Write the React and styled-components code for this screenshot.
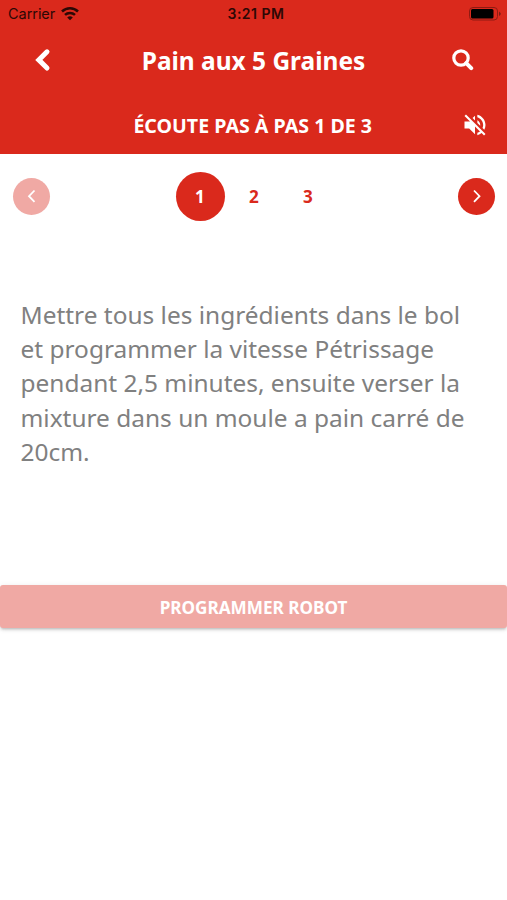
import React from "react";
import styled, { createGlobalStyle } from "styled-components";

const Global = createGlobalStyle`
  * { box-sizing: border-box; }
  body { margin: 0; background: #fff; font-family: "Noto Sans", sans-serif; }
  button { border: 0; padding: 0; background: none; font: inherit; color: inherit; }
`;
const Screen = styled.main`
  width: 507px; height: 900px; background: #fff; overflow: hidden;
`;
const Header = styled.header`
  height: 154.4px; background: #da291c; color: #fff;
`;
const StatusBar = styled.div`
  height: 27px; padding: 0 6px 0 8px; display: grid;
  grid-template-columns: 1fr auto 1fr; align-items: center;
  color: #2d0805; font: 14.5px/27px Inter, sans-serif;
`;
const Carrier = styled.div`
  display: flex; align-items: center; gap: 6px;
`;
const CarrierName = styled.span`
  letter-spacing: -0.05px;
`;
const Clock = styled.div`
  padding-left: 3px; font-weight: 600; font-size: 14px; letter-spacing: .5px;
`;
const Battery = styled.svg`
  justify-self: end; display: block;
`;
const TitleBar = styled.div`
  height: 66px; padding: 0 33px; display: grid;
  grid-template-columns: 22px 1fr 22px; align-items: center;
`;
const Title = styled.h1`
  margin: 0; padding-top: 2px; text-align: center; font-size: 24.45px; line-height: 34px; font-weight: 700;
`;
const IconButton = styled.button`
  display: flex; justify-content: center;
  svg { flex: none; }
`;
const StepBar = styled.div`
  height: 61px; padding: 2px 20.5px 0 21px; display: grid;
  grid-template-columns: 24px 1fr 24px; align-items: center;
`;
const StepTitle = styled.h2`
  grid-column: 2; margin: 0 -10px; padding: 2px 2px 0 0; text-align: center;
  font-size: 19.6px; line-height: 26px; font-weight: 700;
`;
const Pager = styled.nav`
  height: 83.6px; padding: 0 12px 0 13px; display: flex; align-items: center; justify-content: space-between;
`;
const Arrow = styled.button`
  width: 37px; height: 37px; border-radius: 50%; display: flex; align-items: center; justify-content: center;
  color: #fff; background: ${(p) => (p.disabled ? "#f0a9a4" : "#da291c")};
`;
const Steps = styled.div`
  display: flex; gap: 5px;
`;
const Step = styled.button`
  width: 49px; height: 49px; border-radius: 50%; font-size: 17.1px; font-weight: 700;
  color: ${(p) => (p.$active ? "#fff" : "#da291c")};
  background: ${(p) => (p.$active ? "#da291c" : "transparent")};
`;
const Instructions = styled.p`
  margin: 0; height: 347px; padding: 60px 20px 0 20.5px; color: #808080;
  font-size: 24.45px; line-height: 34.2px;
`;
const ProgramButton = styled.button`
  width: 100%; height: 43.5px; padding-top: 1px; border-radius: 3px; display: block; text-align: center;
  background: #f0a9a4; color: #fff; font-size: 17.15px; font-weight: 700;
  box-shadow: 0 3px 2px -2px rgba(0,0,0,.1), 0 2px 3px rgba(0,0,0,.12), 0 1px 6px rgba(0,0,0,.08);
`;

export default function App() {
  return (
    <Screen>
      <Global />
      <Header>
        <StatusBar>
          <Carrier>
            <CarrierName>Carrier</CarrierName>
            <svg width="18" height="14" viewBox="0 0 18 14" fill="none" stroke="currentColor" strokeWidth="2.5">
              <path d="M1 4.500a11.5 11.5 0 0 1 16 0M4 7.900a7.2 7.2 0 0 1 10 0" />
              <path d="M9 13.2 6.2 10.500a4 4 0 0 1 5.6 0z" fill="currentColor" stroke="none" />
            </svg>
          </Carrier>
          <Clock>3:21 PM</Clock>
          <Battery width="32" height="14" viewBox="0 0 32 14">
            <rect x=".5" y=".5" width="28" height="12.5" rx="3.5" fill="none" stroke="#8e1b12" />
            <rect x="2" y="2" width="22.5" height="9.5" rx="1.5" fill="#000" />
            <path d="M30 4.5q3.5 2.3 0 4.6z" fill="#7b1c14" />
          </Battery>
        </StatusBar>
        <TitleBar>
          <IconButton aria-label="Retour">
            <svg width="22" height="24" viewBox="0 0 22 24" fill="none" stroke="#fff" strokeWidth="5"><path d="M14 3.8 5.800 11.900l8.200 8.100" strokeLinecap="round" /></svg>
          </IconButton>
          <Title>Pain aux 5 Graines</Title>
          <IconButton aria-label="Rechercher">
            <svg width="22" height="22" viewBox="0 0 22 22" fill="none" stroke="#fff" strokeWidth="3.2"><circle cx="9" cy="9" r="7.200" /><path d="m14.200 14.200 5 5" strokeWidth="4" strokeLinecap="round" /></svg>
          </IconButton>
        </TitleBar>
        <StepBar>
          <StepTitle>ÉCOUTE PAS À PAS 1 DE 3</StepTitle>
          <IconButton aria-label="Son désactivé">
            <svg width="28" height="28" viewBox="0 0 24 24" fill="#fff"><path d="M16.5 12c0-1.77-1.02-3.29-2.5-4.03v2.21l2.45 2.45c.03-.2.05-.41.05-.63zm2.5 0c0 .94-.2 1.82-.54 2.64l1.51 1.51C20.63 14.91 21 13.5 21 12c0-4.28-2.99-7.86-7-8.77v2.06c2.89.86 5 3.54 5 6.71zM4.27 3 3 4.27 7.73 9H3v6h4l5 5v-6.73l4.25 4.25c-.67.52-1.42.93-2.25 1.18v2.06c1.38-.31 2.63-.95 3.69-1.81L19.73 21 21 19.73l-9-9L4.27 3zM12 4 9.91 6.09 12 8.18V4z" /></svg>
          </IconButton>
        </StepBar>
      </Header>
      <Pager>
        <Arrow disabled aria-label="Précédent"><svg width="20" height="20" viewBox="0 0 20 20" fill="none" stroke="currentColor" strokeWidth="1.8"><path d="m12.5 4.5-5.5 5.7 5.5 5.7" /></svg></Arrow>
        <Steps><Step $active>1</Step><Step>2</Step><Step>3</Step></Steps>
        <Arrow aria-label="Suivant"><svg width="20" height="20" viewBox="0 0 20 20" fill="none" stroke="currentColor" strokeWidth="1.8"><path d="m7 4.5 5.5 5.700-5.5 5.700" /></svg></Arrow>
      </Pager>
      <Instructions>Mettre tous les ingrédients dans le bol et programmer la vitesse Pétrissage pendant 2,5 minutes, ensuite verser la mixture dans un moule a pain carré de 20cm.</Instructions>
      <ProgramButton>PROGRAMMER ROBOT</ProgramButton>
    </Screen>
  );
}
